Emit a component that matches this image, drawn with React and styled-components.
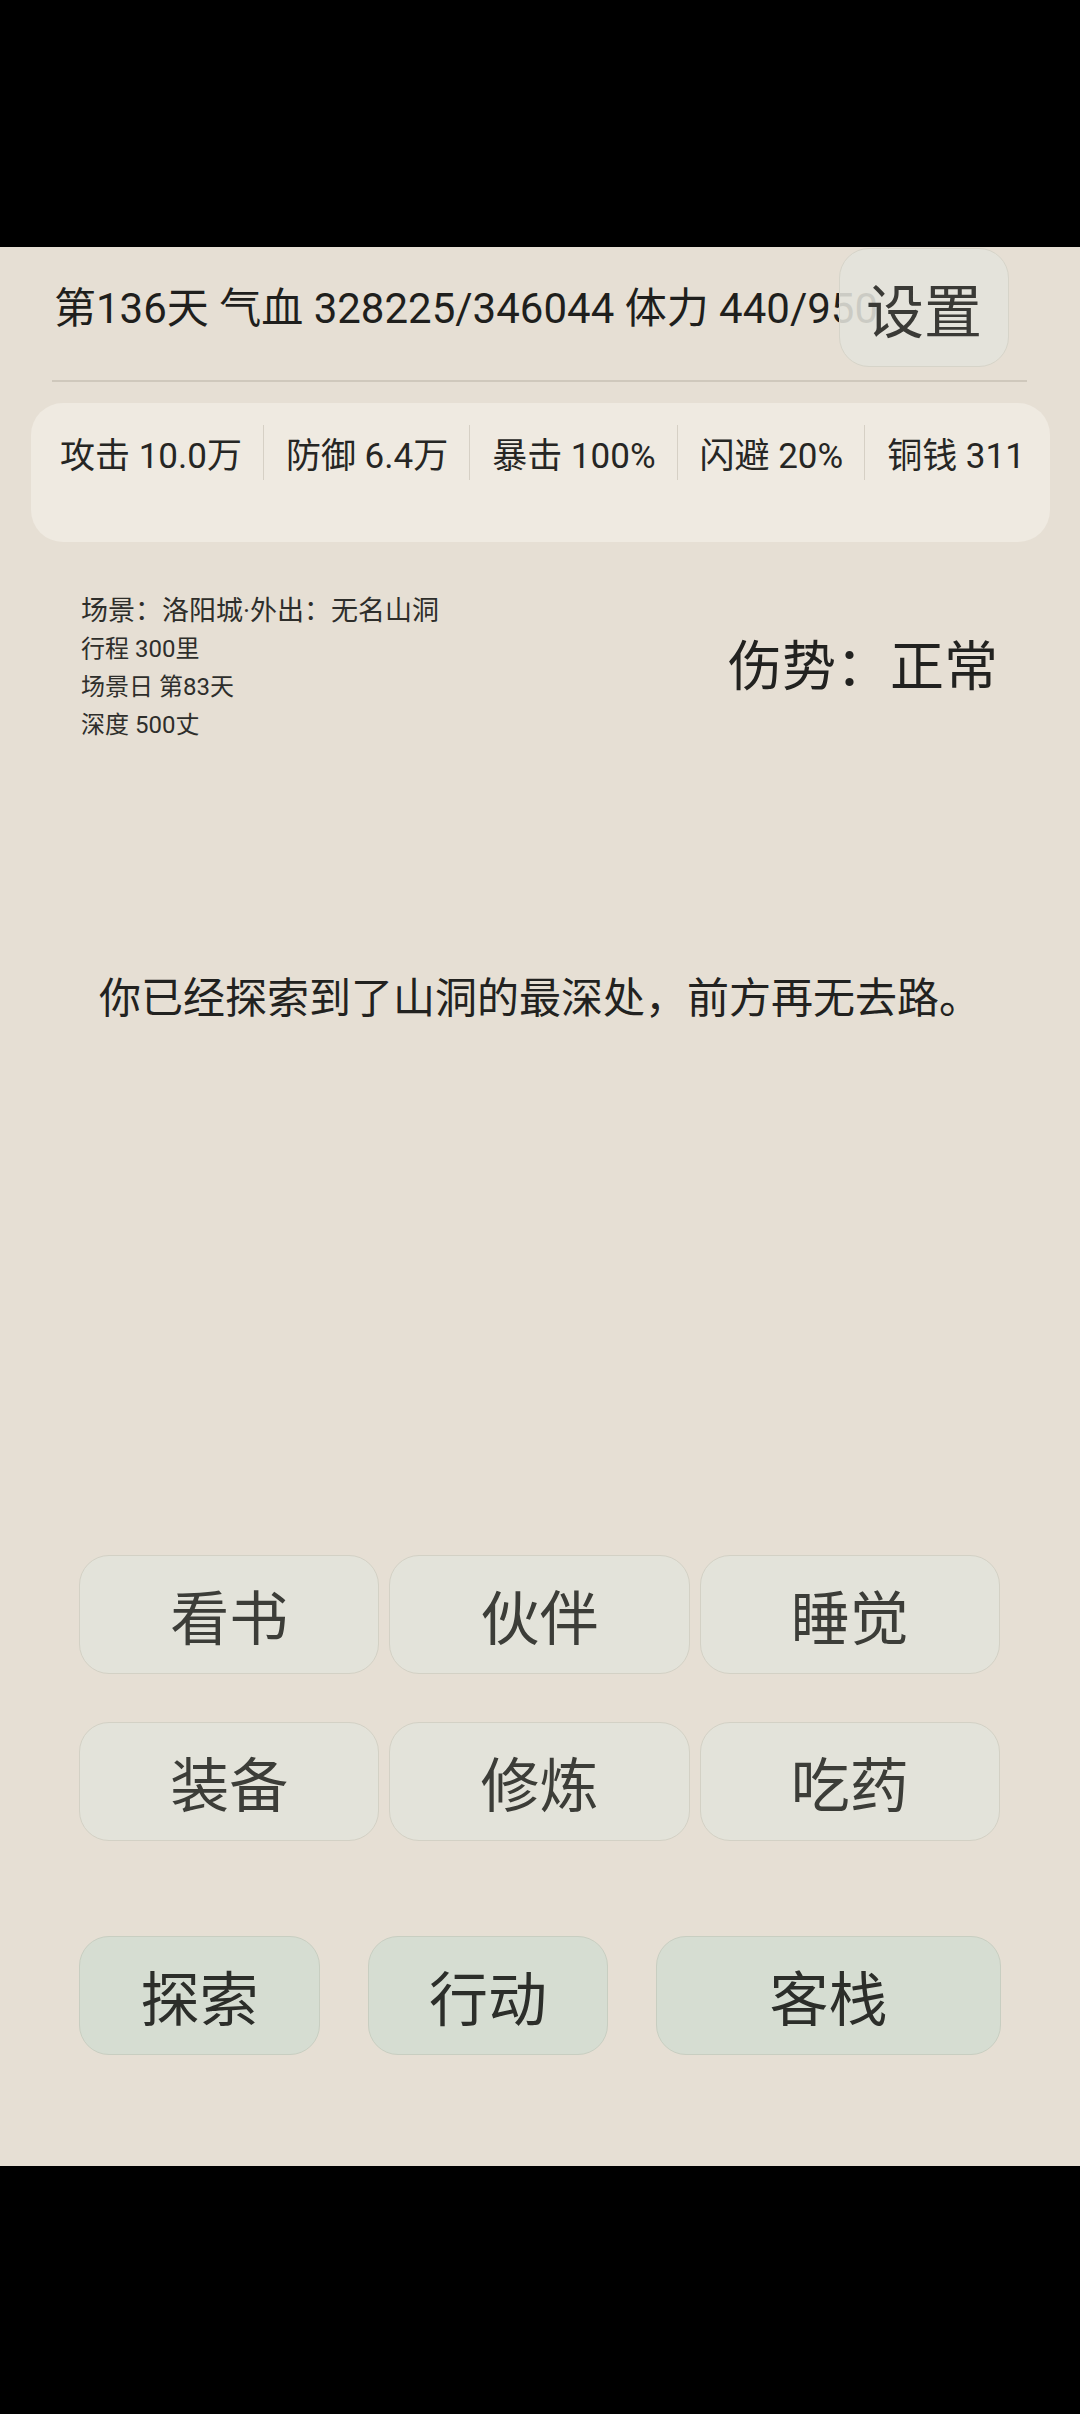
import React from 'react'
import styled, { createGlobalStyle } from 'styled-components'

const GlobalStyle = createGlobalStyle`
  html, body {
    margin: 0;
    padding: 0;
    background: #000;
  }
  body {
    font-family: Roboto, "Noto Sans CJK SC", sans-serif;
  }
`

const Screen = styled.div`
  width: 1080px;
  height: 2414px;
  background: #000;
  padding-top: 247px;
  box-sizing: border-box;
`

const Main = styled.div`
  height: 1919px;
  background: #e6dfd4;
  display: flex;
  flex-direction: column;
`

const Header = styled.div`
  position: relative;
  padding: 34px 52px 0 54px;
  height: 99px;
  overflow: hidden;
`

const HeaderText = styled.div`
  font-size: 42px;
  line-height: 56px;
  color: #1f1f1d;
  white-space: nowrap;
`

const SettingsButton = styled.button`
  position: absolute;
  top: 1px;
  left: 839px;
  width: 170px;
  height: 119px;
  border-radius: 30px;
  border: 1.5px solid #d6d4c9;
  background: rgba(228, 228, 220, 0.88);
  color: #3a3a36;
  font-family: Roboto, "Noto Sans CJK SC", sans-serif;
  font-size: 58px;
  padding: 0;
`

const Divider = styled.div`
  height: 2px;
  margin: 0 53px 0 52px;
  background: #cfc8bc;
`

const StatsCard = styled.div`
  margin: 21px 30px 0 31px;
  height: 139px;
  box-sizing: border-box;
  padding: 22px 30px 0 29px;
  border-radius: 32px;
  background: #efeae1;
  display: flex;
  align-items: flex-start;
`

const Stat = styled.div`
  height: 55px;
  display: flex;
  align-items: center;
  padding: 0 21px;
  font-size: 35px;
  color: #262624;
  white-space: nowrap;
  border-left: ${p => (p.first ? 'none' : '1.5px solid #d6d0c5')};
  padding-left: ${p => (p.first ? '0' : '22px')};
`

const Scene = styled.div`
  margin-top: 50px;
  padding: 0 82px 0 81px;
  display: flex;
  justify-content: space-between;
  align-items: center;
`

const SceneInfo = styled.div`
  display: flex;
  flex-direction: column;
  color: #2e2e2b;
`

const SceneLine = styled.div`
  font-size: ${p => (p.big ? '27px' : '24px')};
  line-height: 38px;
`

const Injury = styled.div`
  font-size: 54px;
  line-height: 64px;
  color: #222220;
`

const Message = styled.div`
  margin-top: 225px;
  text-align: center;
  font-size: 42px;
  line-height: 60px;
  color: #222220;
`

const ActionGrid = styled.div`
  margin-top: auto;
  padding: 0 80px 0 79px;
  display: grid;
  grid-template-columns: repeat(3, 1fr);
  column-gap: 10px;
  row-gap: 48px;
`

const BottomBar = styled.div`
  margin: 95px 0 111px;
  padding: 0 79px;
  display: grid;
  grid-template-columns: 241px 240px 1fr;
  column-gap: 48px;
`

const ActionButton = styled.button`
  height: 119px;
  border-radius: 30px;
  border: 1.5px solid ${p => (p.primary ? '#c8cec1' : '#d3d1c5')};
  background: ${p => (p.primary ? '#d6ddd2' : '#e3e3da')};
  color: ${p => (p.primary ? '#2c2e2a' : '#3c3d38')};
  font-family: Roboto, "Noto Sans CJK SC", sans-serif;
  font-size: 59px;
  padding: 0;
`

const stats = ['攻击 10.0万', '防御 6.4万', '暴击 100%', '闪避 20%', '铜钱 311']
const actions = ['看书', '伙伴', '睡觉', '装备', '修炼', '吃药']
const mainActions = ['探索', '行动', '客栈']

const App = () => {
  return (
    <Screen>
      <GlobalStyle />
      <Main>
        <Header>
          <HeaderText>第136天 气血 328225/346044 体力 440/950</HeaderText>
          <SettingsButton>设置</SettingsButton>
        </Header>
        <Divider />
        <StatsCard>
          {stats.map((s, i) => (
            <Stat key={s} first={i === 0}>{s}</Stat>
          ))}
        </StatsCard>
        <Scene>
          <SceneInfo>
            <SceneLine big>场景：洛阳城·外出：无名山洞</SceneLine>
            <SceneLine>行程 300里</SceneLine>
            <SceneLine>场景日 第83天</SceneLine>
            <SceneLine>深度 500丈</SceneLine>
          </SceneInfo>
          <Injury>伤势：正常</Injury>
        </Scene>
        <Message>你已经探索到了山洞的最深处，前方再无去路。</Message>
        <ActionGrid>
          {actions.map(a => (
            <ActionButton key={a}>{a}</ActionButton>
          ))}
        </ActionGrid>
        <BottomBar>
          {mainActions.map(a => (
            <ActionButton key={a} primary>{a}</ActionButton>
          ))}
        </BottomBar>
      </Main>
    </Screen>
  )
}

export default App
